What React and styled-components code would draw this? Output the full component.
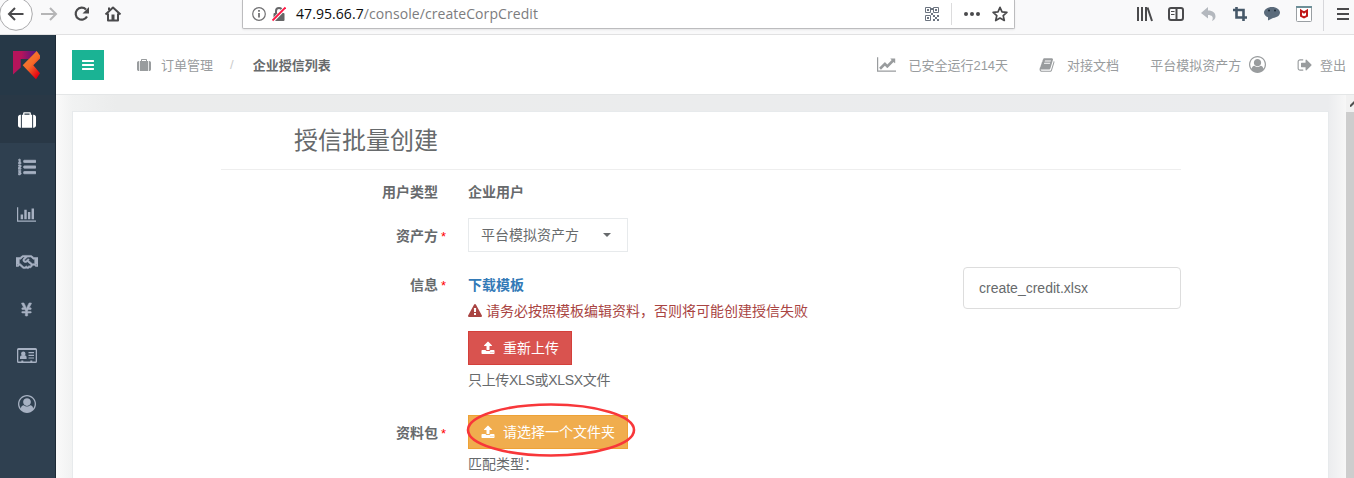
import React from "react";
import styled, { createGlobalStyle } from "styled-components";
import { FaListOl, FaRegHandshake, FaYenSign } from "react-icons/fa";

const GlobalStyle = createGlobalStyle`
  * { box-sizing: border-box; }
  body { margin: 0; overflow: hidden; font-family: "Liberation Sans", "Noto Sans CJK SC", sans-serif; font-size: 14px; color: #676a6c; }
`;

const PATHS = {
  suitcase: [1792, "M640 384h512v-128h-512v128zm-352 0v1280h-64q-92 0-158-66t-66-158v-832q0-92 66-158t158-66h64zm1120 0v1280h-1024v-1280h128v-160q0-40 28-68t68-28h576q40 0 68 28t28 68v160h128zm384 224v832q0 92-66 158t-158 66h-64v-1280h64q92 0 158 66t66 158z"],
  bars: [1536, "M1536 1344v128q0 26-19 45t-45 19h-1408q-26 0-45-19t-19-45v-128q0-26 19-45t45-19h1408q26 0 45 19t19 45zm0-512v128q0 26-19 45t-45 19h-1408q-26 0-45-19t-19-45v-128q0-26 19-45t45-19h1408q26 0 45 19t19 45zm0-512v128q0 26-19 45t-45 19h-1408q-26 0-45-19t-19-45v-128q0-26 19-45t45-19h1408q26 0 45 19t19 45z"],
  barChart: [2048, "M640 896v512h-256v-512h256zm384-512v1024h-256v-1024h256zm1024 1152v128h-2048v-1536h128v1408h1920zm-640-896v768h-256v-768h256zm384-384v1152h-256v-1152h256z"],
  lineChart: [2048, "M2048 1536v128h-2048v-1536h128v1408h1920zm-128-1248v435q0 21-19.5 29.5t-35.5-7.5l-121-121-633 633q-10 10-23 10t-23-10l-233-233-416 416-192-192 585-585q10-10 23-10t23 10l233 233 464-464-121-121q-16-16-7.5-35.5t29.5-19.5h435q14 0 23 9t9 23z"],
  user: [1792, "M896 0q182 0 348 71t286 191 191 286 71 348q0 181-70.5 347t-190.5 286-286 191.5-349 71.5-349-71-285.5-191.5-190.5-286-71-347.5 71-348 191-286 286-191 348-71zm619 1351q149-205 149-455 0-156-61-298t-164-245-245-164-298-61-298 61-245 164-164 245-61 298q0 250 149 455 66-327 306-327 131 128 313 128t313-128q240 0 306 327zm-235-647q0-159-112.5-271.5t-271.5-112.5-271.5 112.5-112.5 271.5 112.5 271.5 271.5 112.5 271.5-112.5 112.5-271.5z"],
  book: [1792, "M1703 478q40 57 18 129l-275 906q-19 64-76.5 107.5t-122.5 43.5h-923q-77 0-148.5-53.5t-99.5-131.5q-24-67-2-127 0-4 3-27t4-37q1-8-3-21.5t-3-19.5q2-11 8-21t16.5-23.5 16.5-23.5q23-38 45-91.5t30-91.5q3-10 .5-30t-.5-28q3-11 17-28t17-23q21-36 42-92t25-90q1-9-2.5-32t.5-28q4-13 22-30.5t22-22.5q19-26 42.5-84.5t27.5-96.5q1-8-3-25.5t-2-26.5q2-8 9-18t18-23 17-21q8-12 16.5-30.5t15-35 16-36 19.5-32 26.5-23.500 36-11.500 47.500 5.500l-1 3q38-9 51-9h761q74 0 114 56t18 130l-274 906q-36 119-71.500 153.500t-128.500 34.500h-869q-27 0-38 15-11 16-1 43 24 70 144 70h923q29 0 56-15.500t35-41.500l300-987q7-22 5-57 38 15 59 43zm-1064 2q-4 13 2 22.500t20 9.500h608q13 0 25.500-9.500t16.500-22.500l21-64q4-13-2-22.500t-20-9.500h-608q-13 0-25.500 9.500t-16.500 22.500zm-83 256q-4 13 2 22.500t20 9.500h608q13 0 25.500-9.500t16.500-22.500l21-64q4-13-2-22.500t-20-9.500h-608q-13 0-25.500 9.500t-16.500 22.500z"],
  signOut: [1664, "M704 1440q0 4 1 20t.5 26.5-3 23.5-10 19.5-20.5 6.5h-320q-119 0-203.5-84.5t-84.5-203.5v-704q0-119 84.5-203.5t203.5-84.5h320q13 0 22.5 9.5t9.5 22.5q0 4 1 20t.5 26.5-3 23.5-10 19.5-20.5 6.5h-320q-66 0-113 47t-47 113v704q0 66 47 113t113 47h312l11.5 1 11.5 3 8 5.5 7 9 2 13.5zm928-544q0 26-19 45l-544 544q-19 19-45 19t-45-19-19-45v-288h-448q-26 0-45-19t-19-45v-384q0-26 19-45t45-19h448v-288q0-26 19-45t45-19 45 19l544 544q19 19 19 45z"],
  upload: [1792, "M1344 1472q0-26-19-45t-45-19-45 19-19 45 19 45 45 19 45-19 19-45zm256 0q0-26-19-45t-45-19-45 19-19 45 19 45 45 19 45-19 19-45zm128-224v320q0 40-28 68t-68 28h-1472q-40 0-68-28t-28-68v-320q0-40 28-68t68-28h427q21 56 70.5 92t110.5 36h256q61 0 110.5-36t70.5-92h427q40 0 68 28t28 68zm-325-648q-17 40-59 40h-256v448q0 26-19 45t-45 19h-256q-26 0-45-19t-19-45v-448h-256q-42 0-59-40-17-39 14-69l448-448q18-19 45-19t45 19l448 448q31 30 14 69z"],
  warning: [1792, "M1024 1375v-190q0-14-9.5-23.5t-22.5-9.5h-192q-13 0-22.5 9.5t-9.5 23.5v190q0 14 9.5 23.5t22.5 9.5h192q13 0 22.5-9.5t9.5-23.5zm-2-374l18-459q0-12-10-19-13-11-24-11h-220q-11 0-24 11-10 7-10 21l17 457q0 10 10 16.5t24 6.5h185q14 0 23.5-6.5t10.5-16.5zm-14-934l768 1408q35 63-2 126-17 29-46.5 46t-63.5 17h-1536q-34 0-63.5-17t-46.5-46q-37-63-2-126l768-1408q17-31 47-49t65-18 65 18 47 49z"],
};

function Icon({ name, size = 14 }) {
  const [w, d] = PATHS[name];
  return (
    <svg width={(w / 1792) * size} height={size} viewBox={`0 0 ${w} 1792`} fill="currentColor">
      <path d={d} />
    </svg>
  );
}

const Window = styled.div`
  width: 1354px; height: 478px; display: flex; flex-direction: column; background: #fff; overflow: hidden;
`;

/* Browser toolbar */
const BrowserBar = styled.div`
  height: 35px; flex: none; display: flex; align-items: flex-start; background: #f9f9fa; border-bottom: 1px solid #e1e1e2; overflow: hidden; color: #4a4a4c;
  svg { display: block; flex: none; }
`;
const NavButtons = styled.div`
  width: 242px; height: 34px; flex: none;
`;
const AddressBar = styled.div`
  width: 773px; height: 29px; flex: none; display: flex; align-items: center; background: #fff;
  border: 1px solid #bcbcbe; border-top: 0; border-radius: 0 0 2px 2px; box-shadow: 0 1px 2px rgba(0,0,0,.08); padding: 0 6px 0 9px;
`;
const Url = styled.span`
  flex: 1; margin-left: 10px; font: 14px/20px "Open Sans", sans-serif; letter-spacing: 0.07px; color: #7c7c7e; white-space: nowrap;
  b { font-weight: 400; color: #0c0c0d; }
`;
const UrlDivider = styled.i`
  width: 1px; height: 22px; background: #dcdcdd; margin: 0 12px;
`;
const ToolIcons = styled.div`
  flex: none; width: 339px; height: 34px;
`;

/* Application shell */
const Shell = styled.div`
  flex: 1; display: flex; min-height: 0;
`;
const Sidebar = styled.nav`
  width: 56px; flex: none; background: #2f4050; border-right: 1px solid #1d2a36; color: #a7b1c2;
`;
const Logo = styled.div`
  height: 60px; background: #263847; display: flex; padding: 16px 0 0 13px;
`;
const SideItem = styled.div`
  height: ${(p) => (p.$active ? 48 : 47.3)}px; display: flex; align-items: center; justify-content: center; padding: 1px 2px 0 0; font-size: 18px;
  background: ${(p) => (p.$active ? "#293846" : "transparent")};
  color: ${(p) => (p.$active ? "#fff" : "inherit")};
`;
const Main = styled.main`
  flex: 1; display: flex; flex-direction: column; min-width: 0;
`;
const Header = styled.header`
  height: 60px; flex: none; display: flex; align-items: center; padding: 0 8px 0 16px; background: #fff; border-bottom: 1px solid #e4e6e7; color: #999c9e; white-space: nowrap;
  font-size: 13px;
`;
const MenuButton = styled.button`
  width: 32px; height: 30px; padding: 0; border: 0; background: #1ab394; color: #fff; display: flex; align-items: center; justify-content: center;
`;
const Crumbs = styled.div`
  display: flex; align-items: center; margin-left: 33px; flex: 1;
  > svg { margin-right: 10px; }
  i { font-style: normal; margin: 0 19px 0 17px; color: #ccc; }
  b { font-weight: 700; color: #676a6c; }
`;
const HeaderLink = styled.div`
  display: flex; align-items: center; gap: ${(p) => p.$gap}px; margin-left: ${(p) => p.$left || 0}px;
`;
const Body = styled.div`
  flex: 1; display: flex; min-height: 0;
`;
const Content = styled.div`
  flex: 1; padding: 16px 17px 0 16px; min-width: 0;
  background: linear-gradient(to right, #fafafa 0, #f1f2f2 16px, #ebecec 60px, #ebecee 1272px, #f7f7f7 1290px);
`;
const Scrollbar = styled.div`
  width: 8px; flex: none; background: #f1f1f1; overflow: hidden;
`;
const ScrollArrow = styled.div`
  height: 17px; display: flex; align-items: center; padding-left: 4px;
`;
const ScrollThumb = styled.div`
  height: 366px; background: #cdcdcd;
`;

/* Form panel */
const Panel = styled.section`
  height: 100%; background: #fff; border: 1px solid #e7eaec; border-bottom: 0; padding: 0 147px 0 148px; overflow: hidden;
`;
const Title = styled.h2`
  height: 58px; margin: 0; padding-left: 73px; border-bottom: 1px solid #eee; font-weight: 400; font-size: 24px; line-height: 58px;
`;
const Row = styled.div`
  display: flex; height: ${(p) => p.$height}px;
`;
const Label = styled.div`
  width: ${(p) => (p.$required ? 226 : 217)}px; margin-right: ${(p) => (p.$required ? 21 : 30)}px; text-align: right; font-weight: 700; line-height: 20px; padding-top: ${(p) => p.$top}px; flex: none;
  &::after { content: ${(p) => (p.$required ? '"*"' : "none")}; color: #f00; font-weight: 400; font-size: 13px; display: inline-block; width: 7px; text-align: center; margin-left: 2px; }
`;
const Field = styled.div`
  flex: 1; display: flex; flex-direction: column; align-items: flex-start; padding-top: ${(p) => p.$top}px; line-height: 20px;
`;
const Select = styled.div`
  width: 160px; height: 34px; border: 1px solid #e7eaec; display: flex; align-items: center; padding: 0 16px 0 12px; justify-content: space-between;
  &::after { content: ""; border: 4px solid transparent; border-top-color: #676a6c; border-bottom: 0; }
`;
const Download = styled.a`
  font-weight: 700; color: #337ab7;
`;
const Warning = styled.div`
  display: flex; align-items: center; gap: 4px; height: 20px; margin-top: 6px; color: #a94442; white-space: nowrap;
`;
const Button = styled.button`
  position: relative; height: 34px; display: flex; align-items: center; gap: 8px; padding: 0 12px; font: inherit; color: #fff; white-space: nowrap;
  background: ${(p) => (p.$danger ? "#d9534f" : "#f0ad4e")};
  border: 1px solid ${(p) => (p.$danger ? "#d43f3a" : "#eea236")};
  margin-top: ${(p) => p.$top || 0}px;
`;
const Hint = styled.div`
  margin-top: 5px; letter-spacing: ${(p) => (p.$tight ? -0.32 : 0)}px;
`;
const FileName = styled.div`
  width: 218px; height: 42px; margin-top: 3px; border: 1px solid #ddd; border-radius: 4px; padding: 0 15px; line-height: 40px; flex: none;
`;
const Ring = styled.svg`
  position: absolute; left: -3px; top: -13px; overflow: visible; pointer-events: none;
`;

function BrowserChrome() {
  return (
    <BrowserBar>
      <NavButtons>
        <svg width="130" height="34" fill="none" stroke="currentColor" strokeWidth="2">
          <circle cx="16" cy="14" r="16.3" fill="#fff" stroke="#aaaaac" strokeWidth="1" />
          <path d="M9 14H23.5M15 8l-6 6 6 6" />
          <path stroke="#b5b5b6" d="M41 14H56M50 8l6 6-6 6" />
          <path strokeWidth="2.2" d="M86 9.5A6 6 0 1 0 87 16.5" />
          <path fill="currentColor" stroke="none" d="M89 7v6.5h-6.5z" />
          <path strokeLinejoin="round" d="M105.5 14.5L113 7.5l7.500 7M108 13.500v7h10v-7" />
          <path strokeWidth="3" d="M113 14.500v6" />
          <path strokeWidth="2" d="M109 10V7.500" />
        </svg>
      </NavButtons>
      <AddressBar>
        <svg width="34" height="18" fill="none">
          <circle cx="7" cy="9" r="6.300" stroke="#707072" strokeWidth="1.200" />
          <path d="M7 8v4.500M7 5v1.700" stroke="#606062" strokeWidth="1.600" />
          <rect x="21.500" y="8" width="11" height="8" rx="1" fill="#666668" />
          <path d="M24 8V6a3 3 0 0 1 6 0v2" stroke="#666668" strokeWidth="2" />
          <path d="M20.500 16L33.500 2.500" stroke="#fff" strokeWidth="3.500" />
          <path d="M20.500 15.500L33.500 2.500" stroke="#ff1744" strokeWidth="1.800" />
        </svg>
        <Url><b>47.95.66.7</b>/console/createCorpCredit</Url>
        <svg width="14" height="14" viewBox="0 0 14 14" fill="none" stroke="#6c7480">
          <path d="M.5.5h5v5h-5zM8.500.5h5v5h-5zM.5 8.500h5v5h-5z" />
          <path strokeWidth="2" d="M2 3h2M10 3h2M2 11h2M8 9h2M12 9h2M10 11h2M8 13h2M12 13h2M7 1v2M7 6v2" />
        </svg>
        <UrlDivider />
        <svg width="44" height="16" viewBox="0 0 44 16" fill="none" stroke="#4a4a4c" strokeWidth="1.700" strokeLinejoin="round">
          <g fill="#4a4a4c" stroke="none"><circle cx="2" cy="8" r="2" /><circle cx="8" cy="8" r="2" /><circle cx="14" cy="8" r="2" /></g>
          <path d="M36 1.300l2 4.500 4.900.5-3.700 3.300 1.100 4.900L36 12l-4.300 2.500 1.100-4.900-3.700-3.300 4.900-.5z" />
        </svg>
      </AddressBar>
      <ToolIcons>
        <svg width="339" height="34" viewBox="1015 0 339 34" fill="none" stroke="currentColor" strokeWidth="2">
          <path d="M1138 7v14M1142 7v14M1146 7v14M1147.500 7.500l4.500 13.500" />
          <rect x="1169" y="8" width="14" height="12" rx="2" />
          <path d="M1176.500 8v12" /><path strokeWidth="1" d="M1171 11.500h3.500M1171 14.500h3.500" />
          <path fill="#b4b8be" stroke="none" d="M1201 13l7-6v3.500c5 0 7.500 2.500 7.500 6 0 2-1.500 3.500-3.500 4.500 2-4 0-6-4-6v3.500z" />
          <path stroke="#465868" strokeWidth="2.600" d="M1233 10h10.500v11M1236.500 7v10.500h10.500" />
          <path fill="#5b6b7b" stroke="none" d="M1272 7c4.500 0 8 2.500 8 5.500s-3 5-7 5.500l-5 2.500v-3.200c-2.500-1-4-2.600-4-4.800 0-3 3.500-5.500 8-5.500z" />
          <circle cx="1269" cy="10.500" r="1" fill="#1e2b38" stroke="none" /><circle cx="1275" cy="10.500" r="1" fill="#1e2b38" stroke="none" />
          <rect x="1296.500" y="6.500" width="15" height="15" rx="1" stroke="#9a9fa3" strokeWidth="1" fill="#fff" />
          <path stroke="#6d8f98" d="M1296 7h16" />
          <path stroke="#c01818" strokeWidth="2" d="M1301 10.500v5.500l3 1.500 3-1.500v-5.500l-3 2z" />
          <path stroke="#d7d7db" strokeWidth="1" d="M1323.500 0v31" />
          <path d="M1337 9h12M1337 14h12M1337 19h12" />
        </svg>
      </ToolIcons>
    </BrowserBar>
  );
}

function CardIcon() {
  return (
    <svg width="20" height="16" viewBox="0 0 20 16" fill="currentColor">
      <path fillRule="evenodd" d="M1.500 0h17A1.500 1.500 0 0 1 20 1.500v12a1.500 1.500 0 0 1-1.500 1.500h-17A1.500 1.500 0 0 1 0 13.500v-12A1.500 1.500 0 0 1 1.500 0zM1.300 2v11.500h3v-1h2v1h7v-1h2v1h3.400V2z" />
      <circle cx="6.300" cy="5.700" r="2.200" />
      <path d="M3 11V9.500C3 8 4 7.300 5 7.300h2.600c1 0 2 .7 2 2.200V11zM11.500 4h5.500v1.200h-5.500zM11.500 6.700h5.500v1.200h-5.500zM11.500 9.400h5.500v1.200h-5.500z" />
    </svg>
  );
}

export default function App() {
  return (
    <Window>
      <GlobalStyle />
      <BrowserChrome />
      <Shell>
        <Sidebar>
          <Logo>
            <svg width="28" height="29" viewBox="0 0 28 29">
              <defs>
                <linearGradient id="violet"><stop offset=".35" stopColor="#b5145b" /><stop offset="1" stopColor="#4c1685" /></linearGradient>
                <linearGradient id="flame" x1="0" y1="0" x2=".7" y2="1"><stop offset=".2" stopColor="#f27a35" /><stop offset=".55" stopColor="#f66b28" /><stop offset="1" stopColor="#e50012" /></linearGradient>
              </defs>
              <path d="M0 0h24l-8 8H7.700v8.500L0 23.500z" fill="url(#violet)" />
              <path d="M23.700 0L27 4.500V7.500l-6.700 6.800L27 22.300l-4 6L9.700 14.300z" fill="url(#flame)" />
            </svg>
          </Logo>
          <SideItem $active><Icon name="suitcase" size={18} /></SideItem>
          <SideItem><FaListOl stroke="currentColor" strokeWidth={22} /></SideItem>
          <SideItem><Icon name="barChart" size={17} /></SideItem>
          <SideItem><FaRegHandshake size={22} stroke="currentColor" strokeWidth={16} /></SideItem>
          <SideItem><FaYenSign size={15} stroke="currentColor" strokeWidth={18} /></SideItem>
          <SideItem><CardIcon /></SideItem>
          <SideItem><Icon name="user" size={18} /></SideItem>
        </Sidebar>
        <Main>
          <Header>
            <MenuButton><Icon name="bars" /></MenuButton>
            <Crumbs>
              <Icon name="suitcase" /><span>订单管理</span><i>/</i><b>企业授信列表</b>
            </Crumbs>
            <HeaderLink $gap={12}><Icon name="lineChart" size={17} /><span>已安全运行214天</span></HeaderLink>
            <HeaderLink $left={31} $gap={12}><Icon name="book" size={16} /><span>对接文档</span></HeaderLink>
            <HeaderLink $left={31} $gap={8}><span>平台模拟资产方</span><Icon name="user" size={17} /></HeaderLink>
            <HeaderLink $left={31} $gap={8}><Icon name="signOut" size={16} /><span>登出</span></HeaderLink>
          </Header>
          <Body>
            <Content>
              <Panel>
                <Title>授信批量创建</Title>
                <Row $height={41}>
                  <Label $top={12}>用户类型</Label>
                  <Field $top={12}><b>企业用户</b></Field>
                </Row>
                <Row $height={53}>
                  <Label $required $top={15}>资产方</Label>
                  <Field $top={7}><Select>平台模拟资产方</Select></Field>
                </Row>
                <Row $height={141}>
                  <Label $required $top={11}>信息</Label>
                  <Field $top={11}>
                    <Download>下载模板</Download>
                    <Warning><Icon name="warning" />请务必按照模板编辑资料，否则将可能创建授信失败</Warning>
                    <Button $danger $top={10}><Icon name="upload" />重新上传</Button>
                    <Hint $tight>只上传XLS或XLSX文件</Hint>
                  </Field>
                  <FileName>create_credit.xlsx</FileName>
                </Row>
                <Row $height={80}>
                  <Label $required $top={18}>资料包</Label>
                  <Field $top={10}>
                    <Button>
                      <Icon name="upload" />请选择一个文件夹
                      <Ring width="170" height="54"><ellipse cx="85" cy="27" rx="83" ry="25.500" fill="none" stroke="#f8373a" strokeWidth="2.600" /></Ring>
                    </Button>
                    <Hint>匹配类型：</Hint>
                  </Field>
                </Row>
              </Panel>
            </Content>
            <Scrollbar>
              <ScrollArrow><svg width="10" height="6" fill="none" stroke="#505050" strokeWidth="2"><path d="M0 5.500L5 .5l5 5" /></svg></ScrollArrow>
              <ScrollThumb />
            </Scrollbar>
          </Body>
        </Main>
      </Shell>
    </Window>
  );
}
